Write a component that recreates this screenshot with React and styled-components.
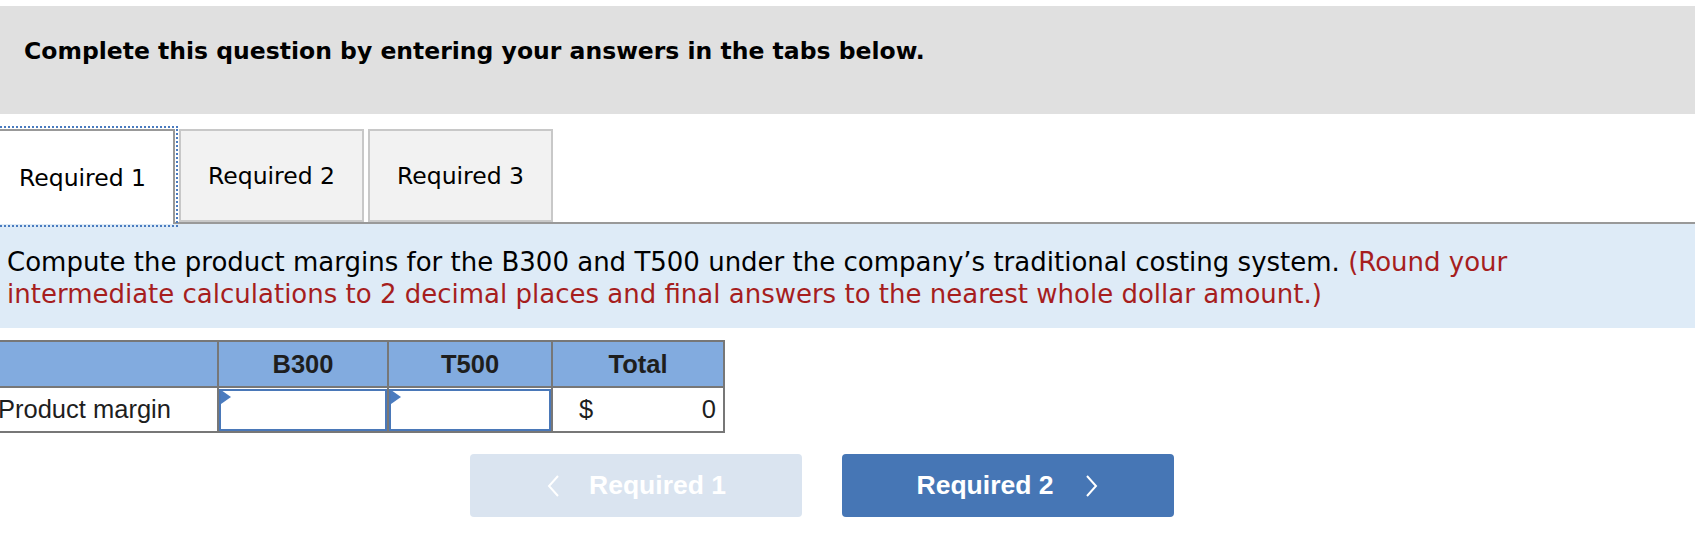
import React from 'react';
import styled, { createGlobalStyle } from 'styled-components';

const GlobalStyle = createGlobalStyle`
  html, body {
    margin: 0;
    padding: 0;
    background: #fff;
    overflow: hidden;
  }
`;

const Page = styled.div`
  width: 1695px;
  padding-top: 6px;
  font-family: "DejaVu Sans", Verdana, sans-serif;
  color: #000;
`;

const Banner = styled.div`
  height: 108px;
  background: #e0e0e0;
  padding: 31px 0 0 24px;
  box-sizing: border-box;
`;

const BannerTitle = styled.h1`
  margin: 0;
  font-size: 23.5px;
  line-height: 28px;
  font-weight: bold;
`;

const TabStrip = styled.div`
  display: flex;
  align-items: flex-end;
  gap: 4px;
  margin: 15px 0 0 -10px;
  border-bottom: 2px solid #999;
`;

const Tab = styled.button`
  height: ${(p) => (p.$active ? '95px' : '93px')};
  margin-bottom: ${(p) => (p.$active ? '-2px' : '0')};
  padding: 0 27px;
  box-sizing: border-box;
  border: 2px solid ${(p) => (p.$active ? '#999' : '#c8c8c8')};
  border-bottom: ${(p) => (p.$active ? 'none' : '2px solid #c8c8c8')};
  background: ${(p) => (p.$active ? '#fff' : '#f2f2f2')};
  outline: ${(p) => (p.$active ? '2px dotted #4a7bbf' : 'none')};
  outline-offset: 1px;
  font-family: "DejaVu Sans", Verdana, sans-serif;
  font-size: 23.5px;
  color: #000;
  cursor: pointer;
`;

const Prompt = styled.p`
  margin: 0;
  background: #deebf7;
  padding: 22px 20px 18px 7px;
  font-size: 26px;
  line-height: 32px;
`;

const Hint = styled.span`
  color: #a61e1e;
`;

const Grid = styled.table`
  margin: 12px 0 0 -10px;
  border-collapse: collapse;
  border: 2px solid #777;
  font-family: "Liberation Sans", Arial, sans-serif;
  font-size: 25.5px;
  color: #1e1e1e;
  table-layout: fixed;
`;

const HeadCell = styled.th`
  height: 44px;
  padding: 0;
  background: #82abdf;
  border: 2px solid #777;
  font-weight: bold;
  text-align: center;
`;

const LabelCell = styled.td`
  height: 43px;
  padding: 0 0 0 6px;
  border: 2px solid #777;
  text-align: left;
  white-space: nowrap;
`;

const InputCell = styled.td`
  height: 43px;
  padding: 0;
  border: 2px solid #777;
`;

const InputBox = styled.span`
  position: relative;
  display: block;
  height: 42px;
`;

const AnswerInput = styled.input`
  display: block;
  width: 100%;
  height: 100%;
  box-sizing: border-box;
  border: 2px solid #4a78b8;
  margin: 0;
  padding: 0 8px;
  font: inherit;
  text-align: right;
  background: #fff;
  outline: none;
`;

const Marker = styled.span`
  position: absolute;
  left: 2px;
  top: 1px;
  width: 0;
  height: 0;
  border-top: 7px solid transparent;
  border-bottom: 7px solid transparent;
  border-left: 10px solid #4a7bbf;
`;

const TotalCell = styled.td`
  height: 43px;
  padding: 0 7px 0 26px;
  border: 2px solid #777;
`;

const TotalInner = styled.div`
  display: flex;
  justify-content: space-between;
  align-items: center;
`;

const Nav = styled.div`
  width: 1644px;
  display: flex;
  justify-content: center;
  gap: 40px;
  margin-top: 21px;
`;

const NavButton = styled.button`
  width: 332px;
  height: 63px;
  border: none;
  border-radius: 4px;
  background: ${(p) => (p.$disabled ? '#dae4f0' : '#4676b5')};
  color: #fff;
  display: flex;
  align-items: center;
  justify-content: center;
  gap: ${(p) => (p.$disabled ? '27px' : '30px')};
  font-family: "Liberation Sans", Arial, sans-serif;
  font-size: 26.5px;
  font-weight: bold;
  cursor: ${(p) => (p.$disabled ? 'default' : 'pointer')};
`;

const Chevron = ({ dir }) => (
  <svg width="16" height="24" viewBox="0 0 16 24" aria-hidden="true">
    <polyline
      points={dir === 'left' ? '12,2 3,12 12,22' : '4,2 13,12 4,22'}
      fill="none"
      stroke="#fff"
      strokeWidth="2"
    />
  </svg>
);

const tabs = ['Required 1', 'Required 2', 'Required 3'];

export default function App() {
  return (
    <>
      <GlobalStyle />
      <Page>
        <Banner>
          <BannerTitle>Complete this question by entering your answers in the tabs below.</BannerTitle>
        </Banner>

        <TabStrip>
          {tabs.map((t, i) => (
            <Tab key={t} $active={i === 0}>{t}</Tab>
          ))}
        </TabStrip>

        <Prompt>
          Compute the product margins for the B300 and T500 under the company’s traditional costing system.{' '}
          <Hint>(Round your intermediate calculations to 2 decimal places and final answers to the nearest whole dollar amount.)</Hint>
        </Prompt>

        <Grid>
          <colgroup>
            <col style={{ width: 227 }} />
            <col style={{ width: 170 }} />
            <col style={{ width: 164 }} />
            <col style={{ width: 172 }} />
          </colgroup>
          <thead>
            <tr>
              <HeadCell />
              <HeadCell>B300</HeadCell>
              <HeadCell>T500</HeadCell>
              <HeadCell>Total</HeadCell>
            </tr>
          </thead>
          <tbody>
            <tr>
              <LabelCell>Product margin</LabelCell>
              <InputCell>
                <InputBox>
                  <AnswerInput type="text" />
                  <Marker />
                </InputBox>
              </InputCell>
              <InputCell>
                <InputBox>
                  <AnswerInput type="text" />
                  <Marker />
                </InputBox>
              </InputCell>
              <TotalCell>
                <TotalInner>
                  <span>$</span>
                  <span>0</span>
                </TotalInner>
              </TotalCell>
            </tr>
          </tbody>
        </Grid>

        <Nav>
          <NavButton $disabled>
            <Chevron dir="left" />
            <span>Required 1</span>
          </NavButton>
          <NavButton>
            <span>Required 2</span>
            <Chevron dir="right" />
          </NavButton>
        </Nav>
      </Page>
    </>
  );
}
